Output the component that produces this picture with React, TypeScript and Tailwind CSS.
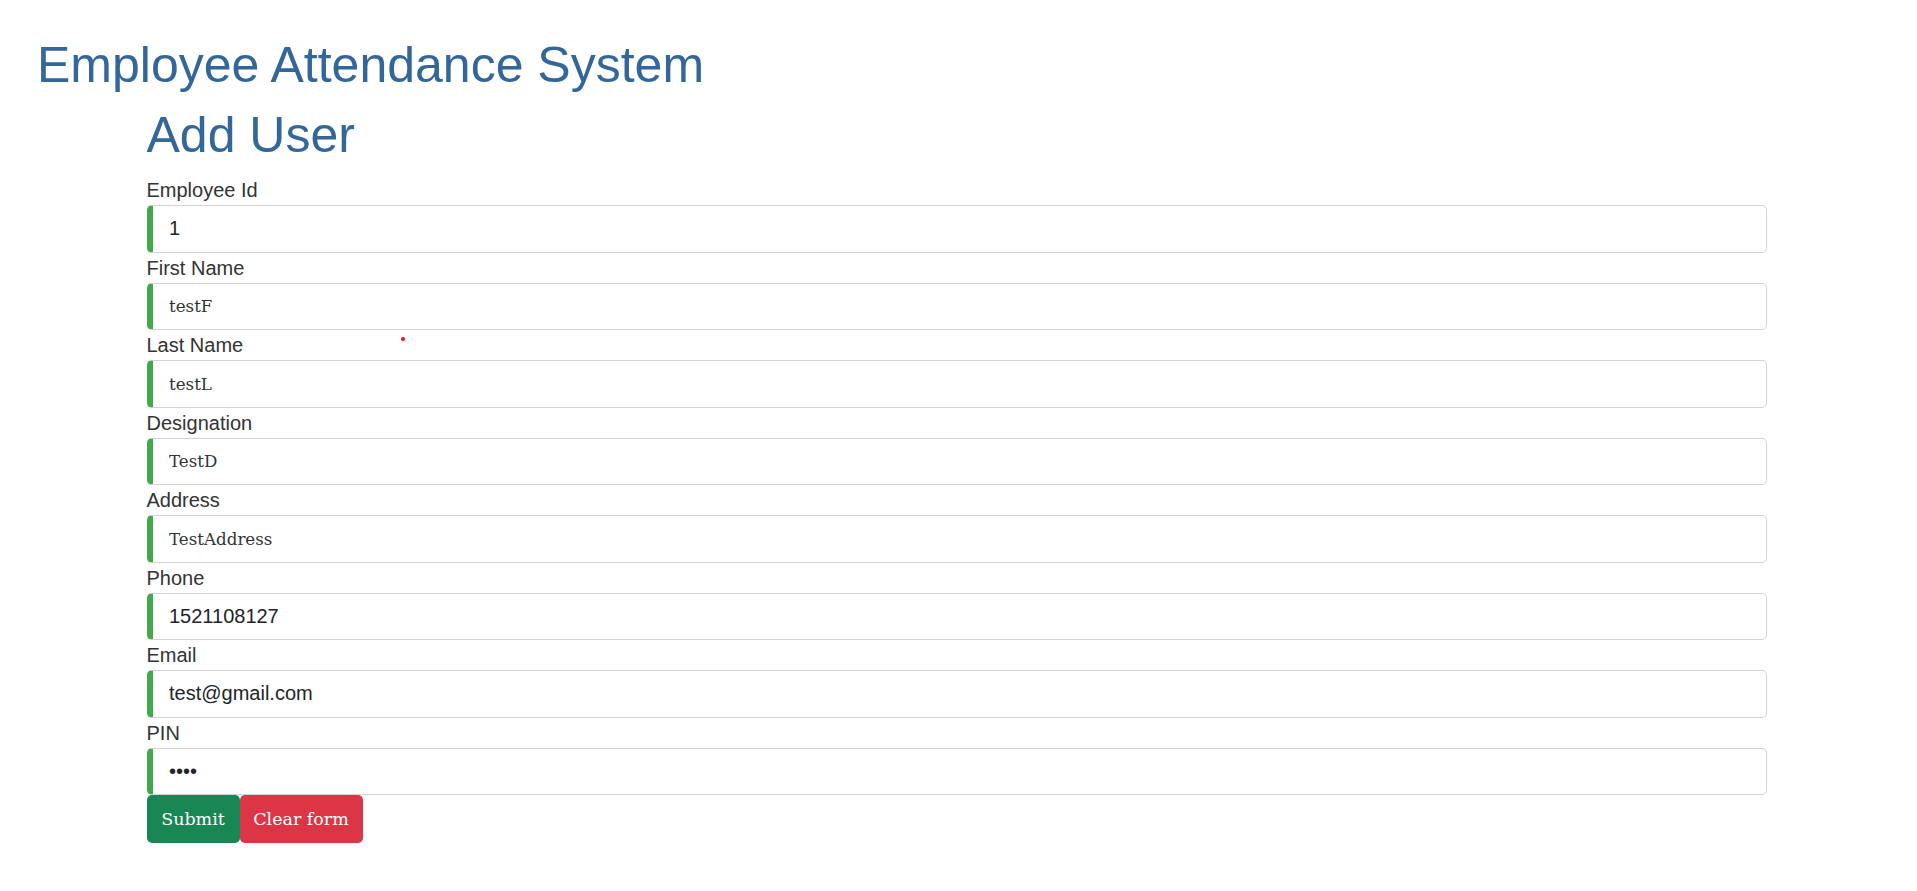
type Field = {
  label: string;
  value: string;
  type: string;
};

const fields: Field[] = [
  { label: "Employee Id", value: "1", type: "number" },
  { label: "First Name", value: "testF", type: "text" },
  { label: "Last Name", value: "testL", type: "text" },
  { label: "Designation", value: "TestD", type: "text" },
  { label: "Address", value: "TestAddress", type: "text" },
  { label: "Phone", value: "1521108127", type: "tel" },
  { label: "Email", value: "test@gmail.com", type: "email" },
  { label: "PIN", value: "1234", type: "password" },
];

function FormRow({ field }: { field: Field }) {
  const serif = field.type === "text";
  return (
    <div>
      <label className="block h-[30px] text-[20px] leading-[30px] text-[#333] [font-family:'Liberation_Sans',Arial,sans-serif]">
        {field.label}
      </label>
      <input
        type={field.type === "password" ? "password" : "text"}
        value={field.value}
        readOnly
        className={
          serif
            ? "block h-[47.5px] w-full rounded-[5px] border border-[#ced4da] border-l-[6px] border-l-[#42A948] bg-white pl-[16.5px] pr-[15px] text-[16.7px] text-[#333] outline-none [font-family:'DejaVu_Serif',Georgia,serif]"
            : "block h-[47.5px] w-full rounded-[5px] border border-[#ced4da] border-l-[6px] border-l-[#42A948] bg-white pl-[16.5px] pr-[15px] text-[20px] text-[#212529] outline-none [font-family:'Liberation_Sans',Arial,sans-serif]"
        }
      />
    </div>
  );
}

export default function App() {
  return (
    <div className="relative min-h-screen bg-white">
      <h1 className="pl-[37px] pt-[35px] mb-[10px] text-[50px] leading-[60px] font-normal text-[#336699] [font-family:'Liberation_Sans',Arial,sans-serif]">
        Employee Attendance System
      </h1>
      <div className="ml-[146.5px] w-[1620px]">
        <h1 className="mb-[10px] text-[50px] leading-[60px] font-normal text-[#336699] [font-family:'Liberation_Sans',Arial,sans-serif]">
          Add User
        </h1>
        <form>
          {fields.map((field) => (
            <FormRow field={field} key={field.label} />
          ))}
          <div className="flex">
            <button
              type="button"
              className="h-[47.5px] w-[93px] rounded-[5px] bg-[#198754] text-[17.5px] text-white [font-family:'DejaVu_Serif',Georgia,serif]"
            >
              Submit
            </button>
            <button
              type="button"
              className="h-[47.5px] w-[123px] rounded-[5px] bg-[#dc3545] text-[17.5px] text-white [font-family:'DejaVu_Serif',Georgia,serif]"
            >
              Clear form
            </button>
          </div>
        </form>
      </div>
      <span className="absolute left-[401px] top-[337px] h-[4px] w-[4px] rounded-full bg-[#ee1111]" />
    </div>
  );
}
